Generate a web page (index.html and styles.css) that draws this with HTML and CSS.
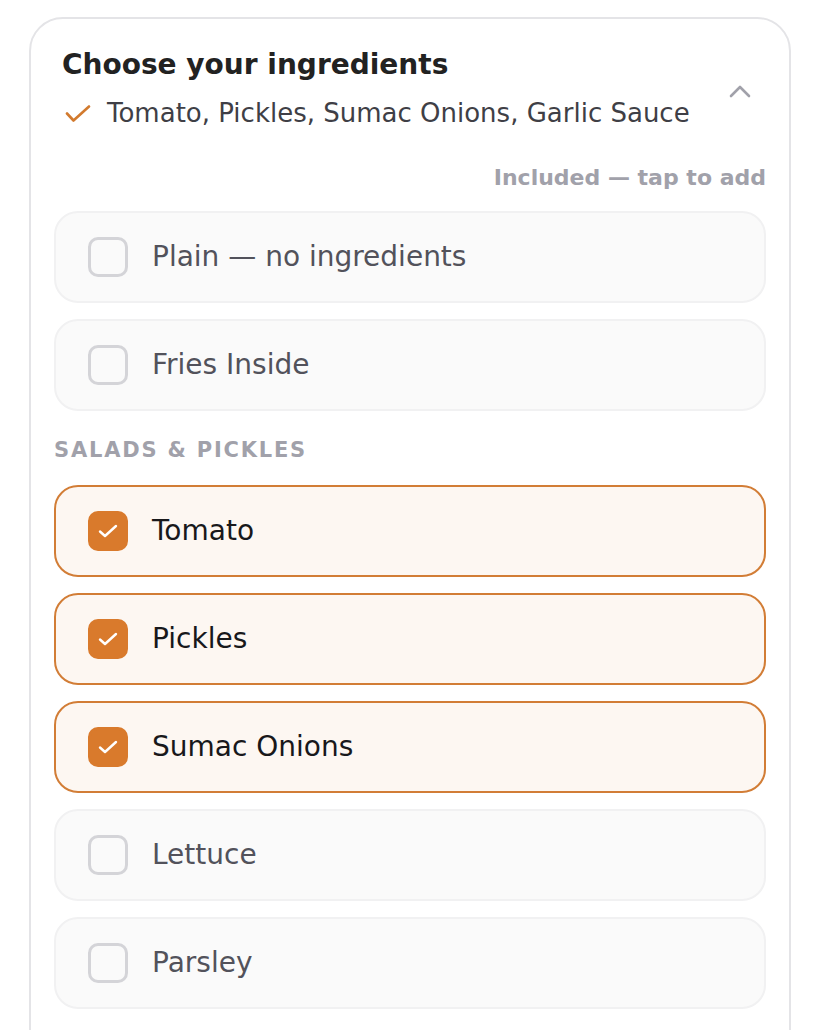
FILE: index.html
```html
<!DOCTYPE html>
<html lang="en">
<head>
<meta charset="utf-8">
<title>Choose your ingredients</title>
<link rel="stylesheet" href="styles.css">
</head>
<body>
<div class="card">
  <div class="header">
    <div class="header-text">
      <div class="title">Choose your ingredients</div>
      <div class="summary">
        <svg class="summary-check" width="26" height="18" viewBox="0 0 26 18"><path d="M2 8.5 L8.5 15.5 L24 1.5" fill="none" stroke="#d27a2e" stroke-width="2.6" stroke-linecap="round" stroke-linejoin="round"/></svg>
        <span>Tomato, Pickles, Sumac Onions, Garlic Sauce</span>
      </div>
    </div>
    <svg class="chevron" width="22" height="14" viewBox="0 0 22 14"><path d="M2 12 L11 3 L20 12" fill="none" stroke="#a1a1aa" stroke-width="2.6" stroke-linecap="round" stroke-linejoin="round"/></svg>
  </div>
  <div class="body">
    <div class="hint">Included — tap to add</div>
    <div class="options">
      <div class="option"><span class="box"></span><span class="label">Plain — no ingredients</span></div>
      <div class="option"><span class="box"></span><span class="label">Fries Inside</span></div>
    </div>
    <div class="section-title">SALADS &amp; PICKLES</div>
    <div class="options">
      <div class="option selected"><span class="box"><svg width="20" height="14" viewBox="0 0 20 14"><path d="M2 7.5 L7 12 L18 2" fill="none" stroke="#fff" stroke-width="2.4" stroke-linecap="round" stroke-linejoin="round"/></svg></span><span class="label">Tomato</span></div>
      <div class="option selected"><span class="box"><svg width="20" height="14" viewBox="0 0 20 14"><path d="M2 7.5 L7 12 L18 2" fill="none" stroke="#fff" stroke-width="2.4" stroke-linecap="round" stroke-linejoin="round"/></svg></span><span class="label">Pickles</span></div>
      <div class="option selected"><span class="box"><svg width="20" height="14" viewBox="0 0 20 14"><path d="M2 7.5 L7 12 L18 2" fill="none" stroke="#fff" stroke-width="2.4" stroke-linecap="round" stroke-linejoin="round"/></svg></span><span class="label">Sumac Onions</span></div>
      <div class="option"><span class="box"></span><span class="label">Lettuce</span></div>
      <div class="option"><span class="box"></span><span class="label">Parsley</span></div>
    </div>
  </div>
</div>
</body>
</html>
```

FILE: styles.css
```css
html, body {
  margin: 0;
  padding: 0;
  background: #ffffff;
  overflow: hidden;
}
body {
  font-family: "DejaVu Sans", Verdana, sans-serif;
  height: 1030px;
}
.card {
  margin: 17px 0 0 29px;
  width: 758px;
  height: 1200px;
  border: 2px solid #e4e4e7;
  border-radius: 34px;
  box-sizing: content-box;
}
.header {
  display: flex;
  justify-content: space-between;
  align-items: center;
  padding: 28px 38px 0 31px;
}
.title {
  font-size: 28px;
  font-weight: bold;
  line-height: 36px;
  color: #222222;
}
.summary {
  display: flex;
  align-items: center;
  gap: 16px;
  margin-top: 12px;
  margin-left: 3px;
  font-size: 26px;
  line-height: 36px;
  color: #3f3f46;
}
.summary-check {
  flex: none;
  margin-top: 2px;
}
.chevron {
  flex: none;
  margin-top: 4px;
}
.body {
  padding: 33px 23px 0 23px;
}
.hint {
  text-align: right;
  font-size: 22px;
  font-weight: bold;
  line-height: 28px;
  color: #a1a1aa;
  margin-bottom: 19px;
}
.options {
  display: flex;
  flex-direction: column;
  gap: 16px;
}
.option {
  display: flex;
  align-items: center;
  gap: 24px;
  height: 92px;
  box-sizing: border-box;
  padding: 0 32px;
  background: #fafafa;
  border: 2px solid #f1f1f2;
  border-radius: 24px;
}
.option.selected {
  background: #fdf7f2;
  border-color: #d27d36;
}
.box {
  flex: none;
  width: 40px;
  height: 40px;
  box-sizing: border-box;
  border: 3px solid #d4d4d8;
  border-radius: 10px;
  display: flex;
  align-items: center;
  justify-content: center;
}
.option.selected .box {
  background: #d97a2c;
  border-color: #d97a2c;
}
.label {
  font-size: 28px;
  line-height: 36px;
  margin-bottom: 1px;
  color: #52525b;
}
.option.selected .label {
  color: #18181b;
}
.section-title {
  font-size: 21px;
  font-weight: bold;
  letter-spacing: 1.8px;
  line-height: 28px;
  color: #a1a1aa;
  margin: 25px 0 21px 0;
}
```
